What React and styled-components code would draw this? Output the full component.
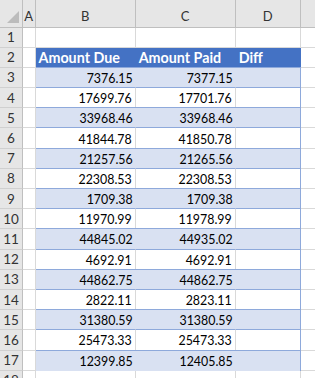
import React from 'react'
import styled, { createGlobalStyle } from 'styled-components'

const GlobalStyle = createGlobalStyle`
  html, body {
    margin: 0;
    padding: 0;
    background: #ffffff;
    overflow: hidden;
  }
  body {
    font-family: Lato, "Liberation Sans", sans-serif;
  }
`

const rows = [
  ['7376.15', '7377.15'],
  ['17699.76', '17701.76'],
  ['33968.46', '33968.46'],
  ['41844.78', '41850.78'],
  ['21257.56', '21265.56'],
  ['22308.53', '22308.53'],
  ['1709.38', '1709.38'],
  ['11970.99', '11978.99'],
  ['44845.02', '44935.02'],
  ['4692.91', '4692.91'],
  ['44862.75', '44862.75'],
  ['2822.11', '2823.11'],
  ['31380.59', '31380.59'],
  ['25473.33', '25473.33'],
  ['12399.85', '12405.85']
]

export default function App () {
  return (
    <>
      <GlobalStyle />
      <Sheet>
        <Corner>
          <svg width='23' height='27' viewBox='0 0 23 27'>
            <polygon points='19,11 19,23 7,23' fill='#bcbcbc' />
          </svg>
        </Corner>
        {['A', 'B', 'C', 'D', ''].map((l, i) => (
          <ColHead key={i} $last={i === 4}>{l}</ColHead>
        ))}

        <RowHead>1</RowHead>
        <Cell /><Cell /><Cell /><Cell /><Cell $last />

        <RowHead>2</RowHead>
        <Cell />
        <HeadCell>Amount Due</HeadCell>
        <HeadCell>Amount Paid</HeadCell>
        <HeadCell $end>Diff</HeadCell>
        <Cell $last />

        {rows.map((r, i) => {
          const band = i % 2 === 0
          return (
            <React.Fragment key={i}>
              <RowHead>{i + 3}</RowHead>
              <Cell />
              <DataCell $band={band}>{r[0]}</DataCell>
              <DataCell $band={band}>{r[1]}</DataCell>
              <DataCell $band={band} $end />
              <Cell $last />
            </React.Fragment>
          )
        })}

        <RowHead>18</RowHead>
        <Cell /><Cell /><Cell /><Cell /><Cell $last />
      </Sheet>
    </>
  )
}

const Sheet = styled.div`
  display: grid;
  grid-template-columns: 23px 12.5px 100.2px 100px 65px 1fr;
  grid-template-rows: 27.5px repeat(18, 20.2px);
  width: 315px;
  height: 378px;
  overflow: hidden;
  font-size: 12.4px;
  color: #000;
`
const Corner = styled.div`
  background: #e6e6e6;
  border-right: 1px solid #bfbfbf;
  border-bottom: 1px solid #bfbfbf;
  box-sizing: border-box;
  > svg { display: block; }
`
const ColHead = styled.div`
  background: #e6e6e6;
  border-right: ${p => p.$last ? 'none' : '1px solid #bfbfbf'};
  border-bottom: 1px solid #bfbfbf;
  box-sizing: border-box;
  display: flex;
  justify-content: center;
  align-items: flex-start;
  padding-top: 8px;
  color: #333;
  font-size: 13px;
`
const RowHead = styled.div`
  background: #e6e6e6;
  border-right: 1px solid #bfbfbf;
  border-bottom: 1px solid #d0d0d0;
  box-sizing: border-box;
  display: flex;
  justify-content: center;
  align-items: center;
  color: #333;
  font-size: 13.5px;
`
const Cell = styled.div`
  border-right: ${p => p.$last ? 'none' : '1px solid #d9d9d9'};
  border-bottom: 1px solid #d9d9d9;
  box-sizing: border-box;
`
const HeadCell = styled.div`
  background: #4472c4;
  color: #fff;
  font-weight: 700;
  font-size: 14.3px;
  box-sizing: border-box;
  display: flex;
  align-items: center;
  padding-left: 3px;
  white-space: nowrap;
  border-right: ${p => p.$end ? '1px solid #4472c4' : 'none'};
`
const DataCell = styled.div`
  background: ${p => p.$band ? '#d9e1f2' : '#fff'};
  border-top: 1px solid #8ea9db;
  border-right: ${p => p.$end ? '1px solid #8ea9db' : p.$band ? 'none' : '1px solid #d9d9d9'};
  margin-top: -1px;
  box-sizing: border-box;
  display: flex;
  align-items: center;
  justify-content: flex-end;
  padding-right: 3px;
  padding-top: 1px;
`
